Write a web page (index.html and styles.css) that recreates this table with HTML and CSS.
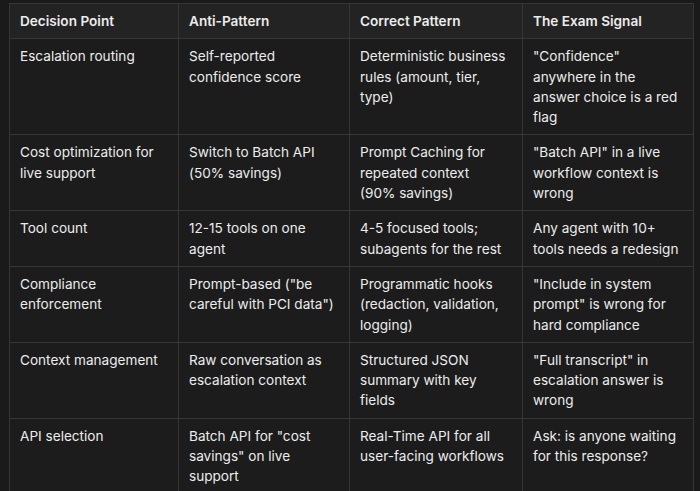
FILE: index.html
```html
<!DOCTYPE html>
<html lang="en">
<head>
<meta charset="utf-8">
<title>Decision table</title>
<link rel="stylesheet" href="styles.css">
</head>
<body>
<table class="grid">
  <colgroup>
    <col class="c1">
    <col class="c2">
    <col class="c3">
    <col class="c4">
  </colgroup>
  <thead>
    <tr>
      <th>Decision Point</th>
      <th>Anti-Pattern</th>
      <th>Correct Pattern</th>
      <th>The Exam Signal</th>
    </tr>
  </thead>
  <tbody>
    <tr>
      <td>Escalation routing</td>
      <td>Self-reported confidence score</td>
      <td>Deterministic business rules (amount, tier, type)</td>
      <td>"Confidence" anywhere in the answer choice is a red flag</td>
    </tr>
    <tr>
      <td>Cost optimization for live support</td>
      <td>Switch to Batch API (50% savings)</td>
      <td>Prompt Caching for repeated context <span class="keep">(90% savings)</span></td>
      <td>"Batch API" in a live workflow context is wrong</td>
    </tr>
    <tr>
      <td>Tool count</td>
      <td>12-15 tools on one agent</td>
      <td>4-5 focused tools; subagents for the rest</td>
      <td>Any agent with 10+ tools needs a redesign</td>
    </tr>
    <tr>
      <td>Compliance enforcement</td>
      <td>Prompt-based ("be careful with PCI data")</td>
      <td>Programmatic hooks (redaction, validation, logging)</td>
      <td>"Include in system prompt" is wrong for hard compliance</td>
    </tr>
    <tr>
      <td>Context management</td>
      <td>Raw conversation as escalation context</td>
      <td>Structured JSON summary with key fields</td>
      <td>"Full transcript" in escalation answer is wrong</td>
    </tr>
    <tr>
      <td>API selection</td>
      <td>Batch API for "cost savings" on live support</td>
      <td>Real-Time API for all user-facing workflows</td>
      <td>Ask: is anyone waiting for this response?</td>
    </tr>
  </tbody>
</table>
</body>
</html>
```
FILE: styles.css
```css
html, body {
  margin: 0;
  background: #1a1a1a;
}
body {
  padding: 3px 8px 0 9px;
  font-family: Inter, "Liberation Sans", Arial, sans-serif;
  font-size: 13.6px;
  line-height: 20.3px;
  color: #ececec;
}
.grid {
  width: 684px;
  table-layout: fixed;
  border-collapse: collapse;
  background: #1c1c1c;
}
.c1 { width: 169px; }
.c2 { width: 171px; }
.c3 { width: 173px; }
.c4 { width: 171px; }
.grid th,
.grid td {
  border: 1px solid #363636;
  padding: 7px 12px 7px 10px;
  text-align: left;
  vertical-align: top;
}
.grid th {
  background: #232323;
  font-weight: 600;
}
.keep {
  white-space: nowrap;
}
```
